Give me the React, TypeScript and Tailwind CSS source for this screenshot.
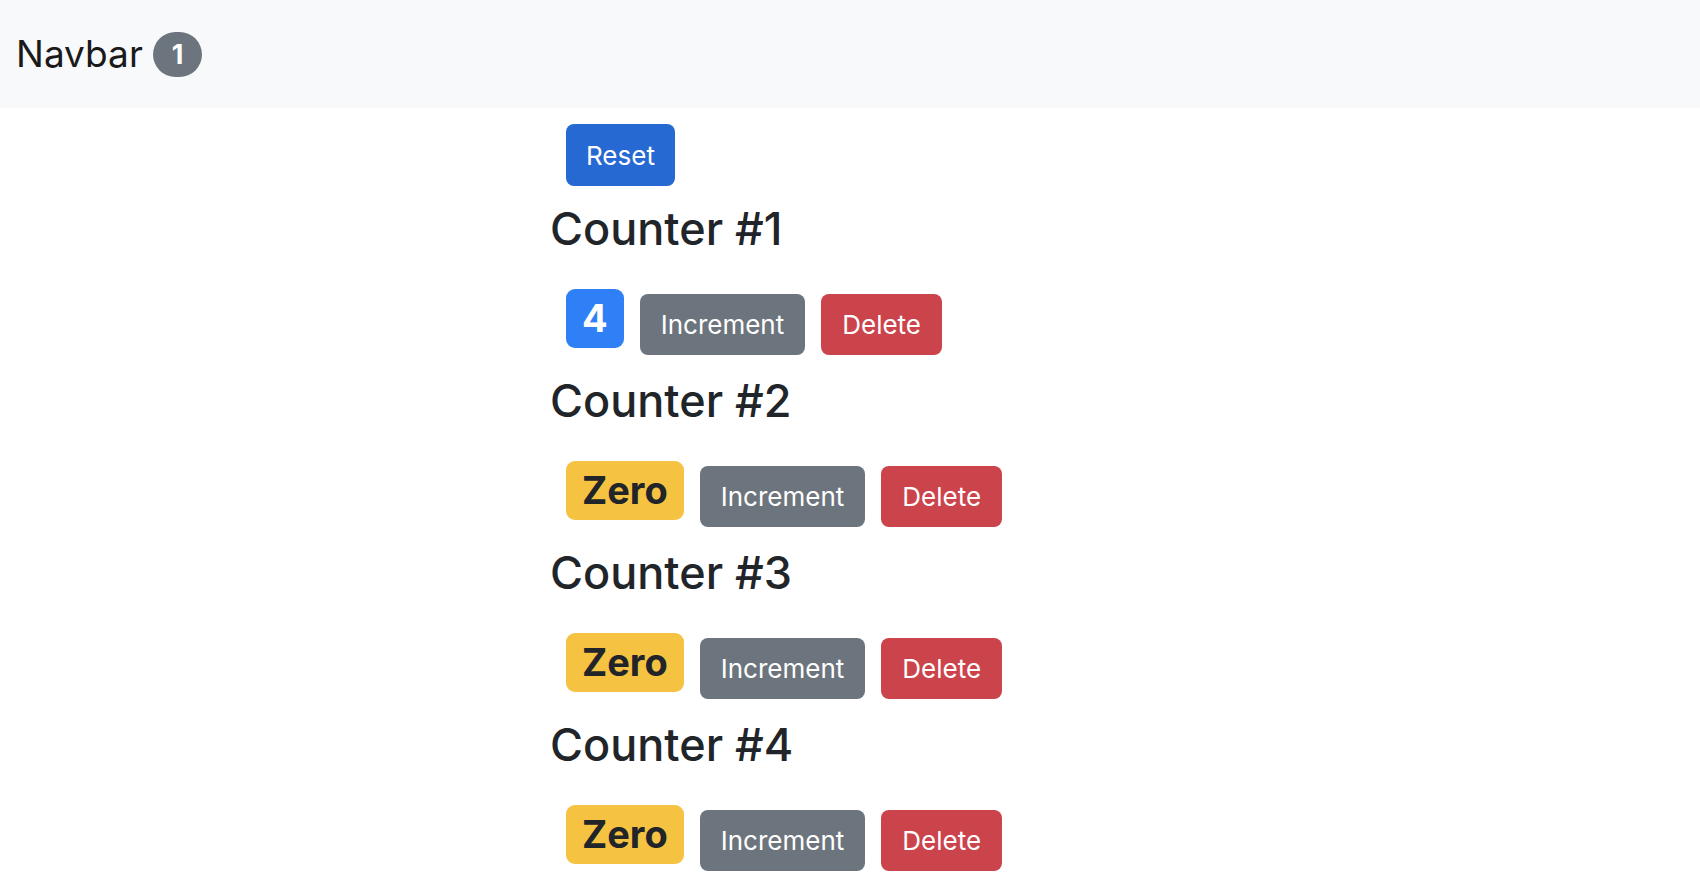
import { useState } from 'react';

interface CounterItem {
  id: number;
  value: number;
}

const font = { fontFamily: 'Inter, "Liberation Sans", sans-serif' };

function Counter({
  counter,
  onIncrement,
  onDelete,
}: {
  counter: CounterItem;
  onIncrement: (id: number) => void;
  onDelete: (id: number) => void;
}) {
  const isZero = counter.value === 0;
  return (
    <div className="mb-[20px]">
      <h3 className="text-[45px] font-medium leading-[52px] text-[#212529]">Counter #{counter.id}</h3>
      <div className="mt-[34px] flex items-start gap-4 pl-4">
        <span
          className={`h-[59px] rounded-[9px] px-[16px] pt-[10px] text-[38px] font-bold leading-none ${
            isZero ? 'bg-[#f5c242] text-[#212529]' : 'bg-[#2f80f6] text-white'
          }`}
        >
          {isZero ? 'Zero' : counter.value}
        </span>
        <button
          onClick={() => onIncrement(counter.id)}
          className="mt-[5px] h-[61px] rounded-[8px] bg-[#6c757d] px-[21px] text-[26px] text-white"
        >
          Increment
        </button>
        <button
          onClick={() => onDelete(counter.id)}
          className="mt-[5px] h-[61px] rounded-[8px] bg-[#cc444b] px-[21px] text-[26px] text-white"
        >
          Delete
        </button>
      </div>
    </div>
  );
}

export default function App() {
  const [counters, setCounters] = useState<CounterItem[]>([
    { id: 1, value: 4 },
    { id: 2, value: 0 },
    { id: 3, value: 0 },
    { id: 4, value: 0 },
  ]);

  const handleIncrement = (id: number) =>
    setCounters(counters.map((c) => (c.id === id ? { ...c, value: c.value + 1 } : c)));
  const handleDelete = (id: number) => setCounters(counters.filter((c) => c.id !== id));
  const handleReset = () => setCounters(counters.map((c) => ({ ...c, value: 0 })));

  const nonZero = counters.filter((c) => c.value > 0).length;

  return (
    <div className="min-h-screen bg-white" style={font}>
      <nav className="flex h-[108px] items-center bg-[#f8f9fa] px-4">
        <span className="text-[37px] text-[#1a1a1a]">Navbar</span>
        <span className="ml-[10px] rounded-full bg-[#6c757d] px-[19px] py-[9px] text-[27px] font-bold leading-none text-white">
          {nonZero}
        </span>
      </nav>
      <main className="mx-auto w-[600px]">
        <button
          onClick={handleReset}
          className="ml-4 mt-4 h-[62px] rounded-[8px] bg-[#2769d3] px-[20px] text-[26px] text-white"
        >
          Reset
        </button>
        <div className="mt-[17px]">
          {counters.map((c) => (
            <Counter key={c.id} counter={c} onIncrement={handleIncrement} onDelete={handleDelete} />
          ))}
        </div>
      </main>
    </div>
  );
}
